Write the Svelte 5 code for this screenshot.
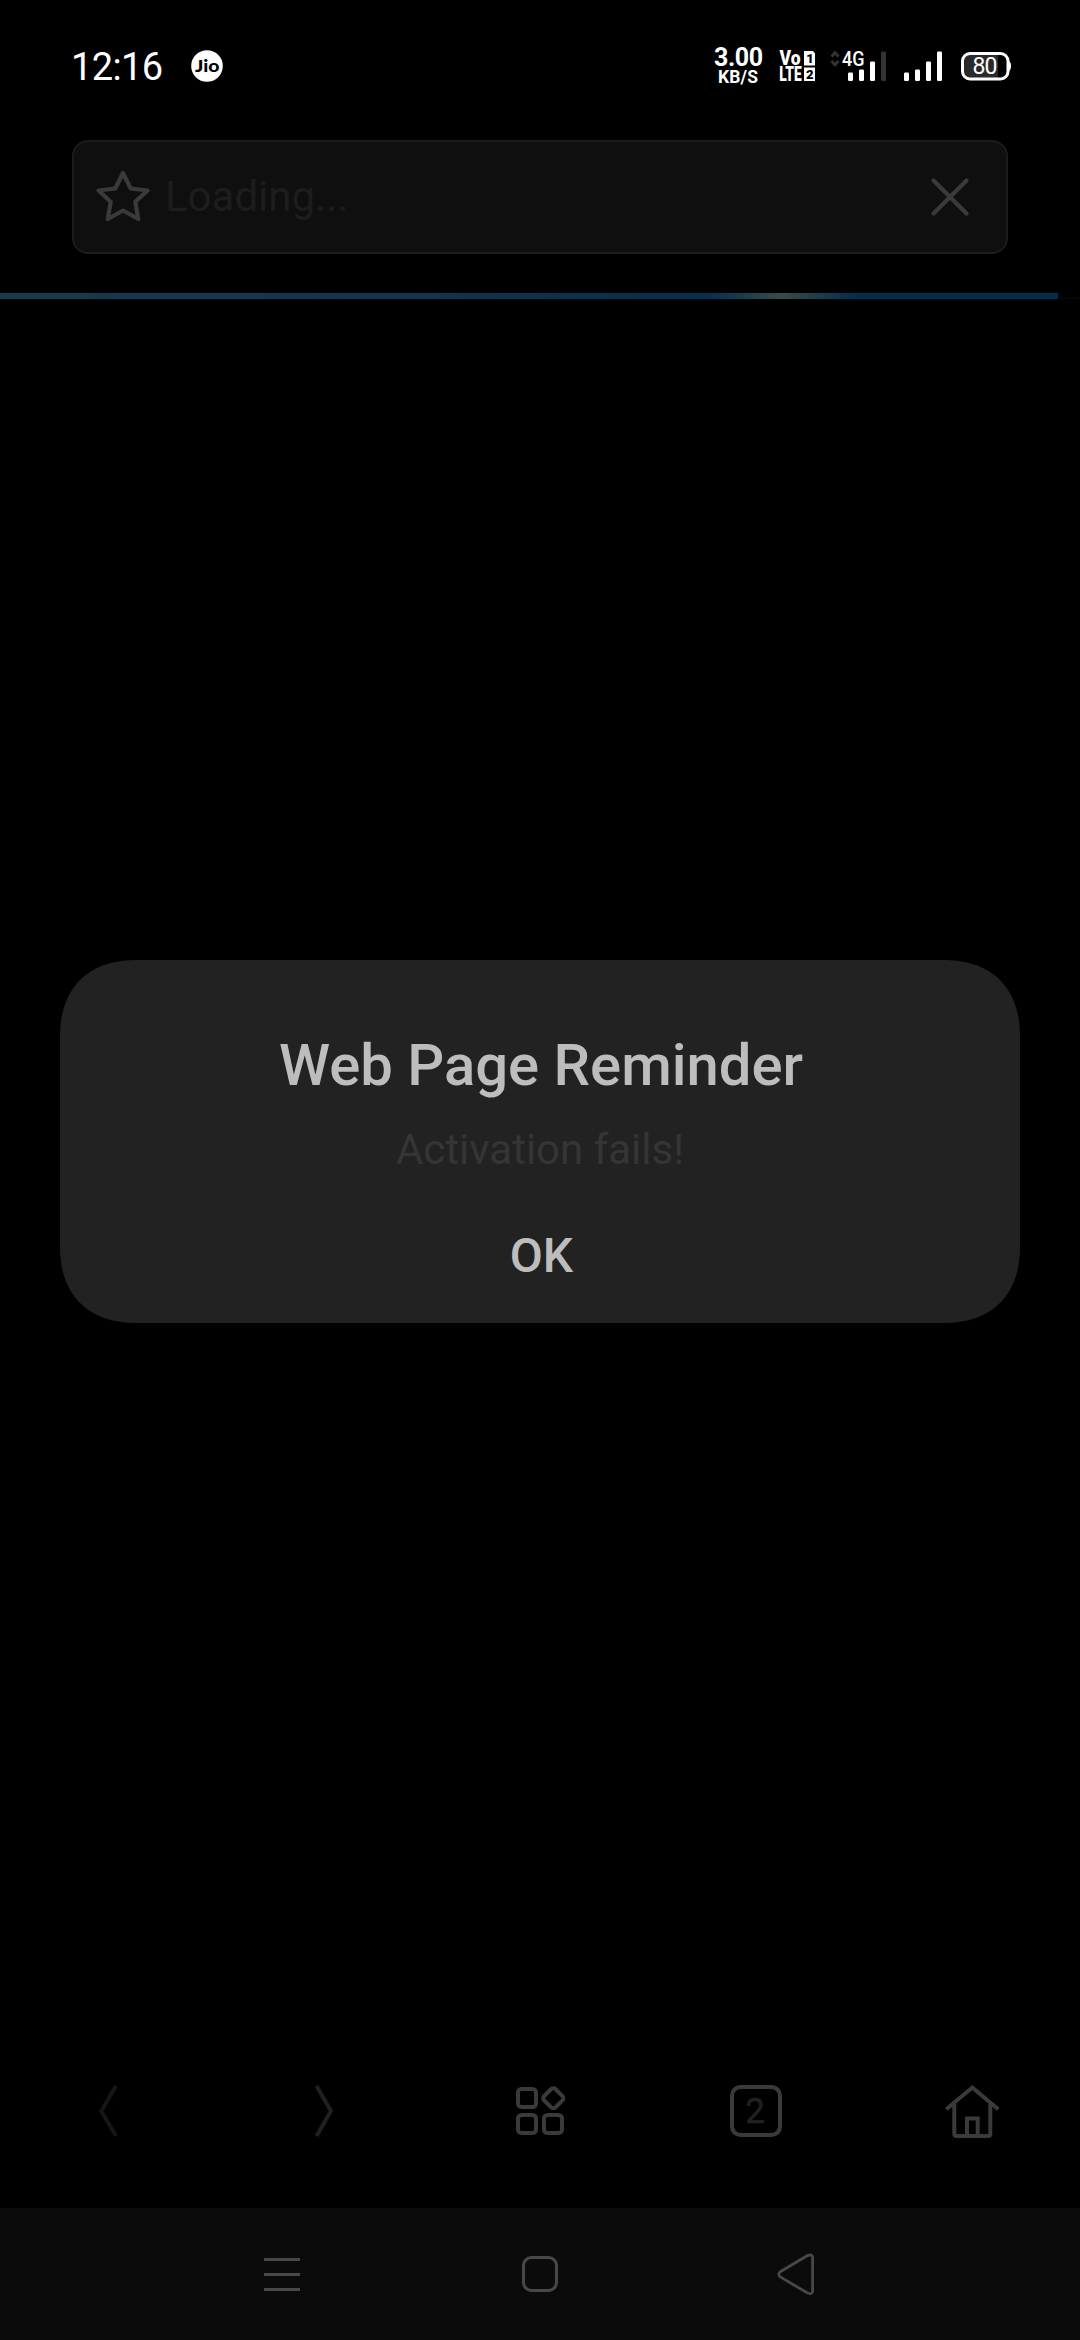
<script>
  const weakBars = [8, 11, 19, 29];
  const fullBars = [8, 11, 19, 29];
</script>

<div class="screen">
  <header class="status">
    <div class="left">
      <svg width="94" height="44" viewBox="0 0 94 44"><text class="clock" x="0" y="35.5" textLength="92">12:16</text></svg>
      <svg class="jio" width="32" height="32" viewBox="0 0 32 32">
        <circle cx="16" cy="16" r="15.8" fill="#fff" />
        <text class="brand" x="4" y="21.8" textLength="24.5" lengthAdjust="spacingAndGlyphs">Jio</text>
      </svg>
    </div>
    <div class="right">
      <svg class="speed" width="50" height="40" viewBox="0 0 50 40">
        <text class="rate" x="0" y="19.2" textLength="49">3.00</text>
        <text class="unit" x="4" y="36" textLength="40">KB/S</text>
      </svg>
      <svg class="volte" width="38" height="32" viewBox="0 0 38 32">
        <text class="vo" x="0.5" y="15" textLength="21" lengthAdjust="spacingAndGlyphs">Vo</text>
        <text class="lte" x="0.2" y="31" textLength="22.5" lengthAdjust="spacingAndGlyphs">LTE</text>
        <path d="M25 1H34L36 3.5V15.5H25ZM25 17.5H36V31H25Z" fill="#fff" />
        <text class="slot" x="27.2" y="13">1</text>
        <text class="slot" x="27" y="29">2</text>
      </svg>
      <svg class="cell" width="58" height="32" viewBox="0 0 58 32">
        <path d="M1.5 6.5L5 2.8L8.5 6.5M1.5 11L5 14.7L8.5 11" fill="none" stroke="#333" stroke-width="3" />
        <text class="net" x="12" y="16" textLength="22.5" lengthAdjust="spacingAndGlyphs">4G</text>
        {#each weakBars as h, i}
          <rect x={18 + i * 11} y={30.5 - h} width="5" height={h + 0.5} rx="1.2" fill={i === 3 ? '#333' : '#fff'} />
        {/each}
      </svg>
      <svg class="cell2" width="39" height="32" viewBox="0 0 39 32">
        {#each fullBars as h, i}
          <rect x={i * 11} y={30.5 - h} width="5" height={h + 0.5} rx="1.2" fill="#fff" />
        {/each}
      </svg>
      <svg class="battery" width="51" height="30" viewBox="0 0 51 30">
        <rect x="3" y="3" width="34" height="23" fill="#2a2a2a" />
        <rect x="1.5" y="1.5" width="45.5" height="25.5" rx="7.5" fill="none" stroke="#fff" stroke-width="3" />
        <path d="M48 9Q50 10 50 14T48 19Z" fill="#fff" />
        <text class="level" x="11.5" y="22" textLength="25">80</text>
      </svg>
    </div>
  </header>

  <div class="address">
    <svg width="56" height="56" viewBox="0 0 56 56">
      <path d="M28 4L35.7 19.5L52.5 21.5L40.3 32.8L43.3 50L28 41.5L12.7 50L15.7 32.8L3.5 21.5L20.3 19.5Z" fill="none" stroke="#3a3a3a" stroke-width="4.2" stroke-linejoin="round" />
    </svg>
    <span class="loading">Loading...</span>
    <svg width="38" height="38" viewBox="0 0 38 38">
      <path d="M2.5 2.5L35.5 35.5M35.5 2.5L2.5 35.5" stroke="#3a3a3a" stroke-width="4.2" stroke-linecap="round" />
    </svg>
  </div>
  <div class="track"><div class="progress"></div></div>

  <main>
    <section class="dialog">
      <svg class="shape" width="960" height="363" viewBox="0 0 960 363">
        <path d="M0 76C0 28 28 0 76 0H884C932 0 960 28 960 76V287C960 335 932 363 884 363H76C28 363 0 335 0 287Z" fill="#222" />
      </svg>
      <h1>Web Page Reminder</h1>
      <p>Activation fails!</p>
      <button>OK</button>
    </section>
  </main>

  <nav class="tools">
    <svg width="60" height="60" viewBox="0 0 60 60"><path d="M38 6L23.3 31L38 56" class="chev dim" /></svg>
    <svg width="60" height="60" viewBox="0 0 60 60"><path d="M22.5 6L37 31L22.5 56" class="chev" /></svg>
    <svg width="60" height="60" viewBox="0 0 60 60" fill="none" stroke="#3a3a3a" stroke-width="4">
      <rect x="8" y="9" width="18" height="18" rx="3.5" />
      <rect x="8" y="35" width="18" height="18" rx="3.5" />
      <rect x="34" y="35" width="18" height="18" rx="3.5" />
      <rect x="35.3" y="10.2" width="16" height="16" rx="3" transform="rotate(45 43.3 18.2)" />
    </svg>
    <svg width="60" height="60" viewBox="0 0 60 60">
      <rect x="6" y="7" width="48" height="48" rx="8.5" fill="none" stroke="#3a3a3a" stroke-width="4" />
      <text class="count" x="29" y="43" text-anchor="middle">2</text>
    </svg>
    <svg width="60" height="60" viewBox="0 0 60 60" fill="none" stroke="#3a3a3a" stroke-width="4">
      <path d="M4.3 29.3L30.3 7.5L56.3 29.3M12.3 24V54Q12.3 56 14.3 56H46.3Q48.3 56 48.3 54V24M25 55V38.5H35.7V55" />
    </svg>
  </nav>

  <footer class="system">
    <svg width="44" height="44" viewBox="0 0 44 44"><path d="M4 7.5H40M4 22.5H40M4 37.5H40" stroke="#484848" stroke-width="3" /></svg>
    <svg width="44" height="44" viewBox="0 0 44 44"><rect x="5.5" y="5.5" width="33" height="33" rx="8" fill="none" stroke="#484848" stroke-width="3" /></svg>
    <svg width="44" height="44" viewBox="0 0 44 44"><path d="M4.3 19.7Q1.3 22.3 4.3 24.900L31.5 41Q36.6 43 36.6 39V5.600Q36.6 1.6 31.5 3.6Z" fill="none" stroke="#484848" stroke-width="2.8" /></svg>
  </footer>
</div>

<style>
  :global(body) { background: #000; }
  .screen {
    width: 1080px; height: 2340px; background: #000; overflow: hidden;
    display: flex; flex-direction: column;
    font-family: Roboto, "Liberation Sans", sans-serif;
  }
  svg { display: block; flex: none; overflow: visible; }
  .status {
    height: 140px; box-sizing: border-box; flex: none;
    padding: 44px 68px 0 71px;
    display: flex; justify-content: space-between; align-items: flex-start;
  }
  .left, .right { display: flex; align-items: flex-start; }
  .clock { font-size: 38px; fill: #fff; }
  .jio { margin: 6px 0 0 26px; }
  .brand { font: 900 17px Lato, sans-serif; fill: #000; }
  .speed { margin: 3px 15px 0 0; }
  .rate { font-size: 25px; font-weight: 700; fill: #fff; }
  .unit { font-size: 17.5px; font-weight: 700; fill: #fff; }
  .volte { margin: 6px 13px 0 0; }
  .vo, .lte { font-size: 20px; font-weight: 900; fill: #fff; }
  .slot { font-size: 13px; font-weight: 900; fill: #000; }
  .cell { margin: 6px 16px 0 0; }
  .net { font-size: 20px; font-weight: 500; fill: #fff; }
  .cell2 { margin: 6px 18px 0 0; }
  .battery { margin-top: 8px; }
  .level { font-size: 23px; fill: #fff; }

  .address {
    width: 936px; height: 114px; box-sizing: border-box; flex: none;
    margin: 0 auto; padding: 0 37px 0 21px;
    display: flex; align-items: center;
    border: 2px solid #1c1c1c; border-radius: 16px; background: #0f0f0f;
  }
  .loading { flex: 1; margin-left: 14px; font-size: 42px; line-height: 50px; color: #1d1d1d; }
  .track { height: 6px; margin-top: 39px; flex: none; background: linear-gradient(#000 66%, #050505 66%); }
  .progress {
    width: 1058px; height: 6px;
    background: linear-gradient(90deg, #19394e 0, #12344d 420px, #042f4e 710px, #384b46 782px, #022e4e 856px, #022d4d 100%);
  }

  main { flex: 1; padding-top: 661px; }
  .dialog {
    position: relative; width: 960px; height: 363px; margin: 0 auto; box-sizing: border-box;
    padding-top: 70px; display: flex; flex-direction: column; align-items: center;
  }
  .shape { position: absolute; left: 0; top: 0; }
  h1, p, button { position: relative; margin: 0; white-space: nowrap; }
  h1 { margin-left: 2px; font-size: 58px; line-height: 70px; font-weight: 500; color: #bdbdbd; }
  p { margin-top: 25px; font-size: 42px; line-height: 50px; color: #353535; }
  button {
    margin: 52px 0 0 3px; padding: 0; border: 0; background: none;
    font: 500 48px/58px Roboto, sans-serif; color: #bdbdbd;
  }

  .tools { height: 128px; flex: none; display: grid; grid-template-columns: repeat(5, 1fr); justify-items: center; }
  .chev { fill: none; stroke: #202020; stroke-width: 4; }
  .dim { stroke: #161616; }
  .count { font-size: 35px; fill: #202020; stroke: #202020; stroke-width: 0.6; }
  .system {
    height: 132px; box-sizing: border-box; flex: none; padding: 44px 260px 0 260px;
    display: flex; justify-content: space-between; background: #0b0b0b;
  }
</style>
